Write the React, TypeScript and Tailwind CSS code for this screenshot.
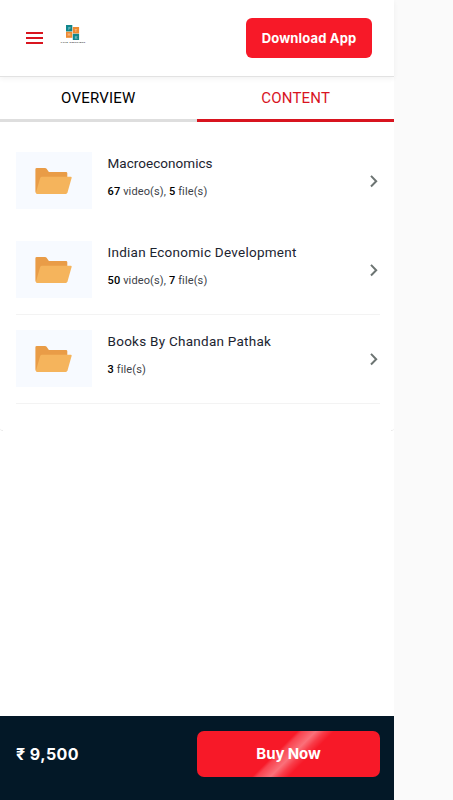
import { Fragment } from 'react'

type Folder = {
    title: string
    counts: { count: number, label: string }[]
    divider: boolean
    titleClass: string
}

const folders: Folder[] = [
    {
        title: 'Macroeconomics',
        counts: [{ count: 67, label: 'video(s)' }, { count: 5, label: 'file(s)' }],
        divider: false,
        titleClass: 'tracking-[0.04px]',
    },
    {
        title: 'Indian Economic Development',
        counts: [{ count: 50, label: 'video(s)' }, { count: 7, label: 'file(s)' }],
        divider: true,
        titleClass: 'tracking-[0.26px]',
    },
    {
        title: 'Books By Chandan Pathak',
        counts: [{ count: 3, label: 'file(s)' }],
        divider: true,
        titleClass: 'tracking-[0.26px]',
    },
]

const Logo = () => (
    <svg width="26" height="22" viewBox="0 0 26 22" className="mb-[6px] ml-[17px]" fontFamily="Roboto, sans-serif">
        <rect x="6" y="1" width="6.3" height="6.5" fill="#11868b" />
        <rect x="12.8" y="3" width="6.3" height="6.5" fill="#ee8a30" />
        <rect x="6" y="7.8" width="6.3" height="6" fill="#ee8a30" />
        <rect x="12.8" y="9.8" width="6.3" height="6.2" fill="#11868b" />
        <g fill="#fff" fillOpacity="0.5" fontSize="4" fontWeight="700" textAnchor="middle">
            <text x="9.2" y="5.7">P</text>
            <text x="16" y="7.7">T</text>
            <text x="9.2" y="12.3">H</text>
            <text x="16" y="14.5">K</text>
        </g>
        <text x="0.8" y="19.4" fontSize="2.4" fontWeight="700" textLength="24.5" fill="#333">PTHK CREATIONS</text>
    </svg>
)

const FolderIcon = () => (
    <svg width="38" height="28" viewBox="0 0 38 28">
        <path d="M.4 2.2Q.4.9 1.7.9H10q1 0 1.6.9l1.9 2.6q.4.6 1.3.6H31q1.3 0 1.3 1.3V14L2.5 26.6Q.4 26.6.4 24.6Z" fill="#e99c47" />
        <path d="M7 9.8h28.8q1.1 0 .8 1.1l-4.1 14.7q-.4 1.3-1.7 1.3H2.2Q.6 26.9 1 25.2L5.2 11.1Q5.6 9.8 7 9.8Z" fill="#f5b45c" />
    </svg>
)

const ChevronIcon = () => (
    <svg width="10" height="14" viewBox="0 0 10 14" fill="none" stroke="#6c7472" strokeWidth="2">
        <path d="M2 1.9 7.2 7.2 2 12.5" />
    </svg>
)

const FolderRow = ({ folder }: { folder: Folder }) => (
    <li className={`flex h-[89px] border-b ${folder.divider ? 'border-[#f3f3f3]' : 'border-transparent'}`}>
        <div className="mt-[15px] flex h-[57px] w-[76px] items-center justify-center bg-[#f7faff]">
            <FolderIcon />
        </div>
        <div className="ml-[15.5px] flex-1 pt-4">
            <h2 className={`text-[13.5px] leading-5 text-[#1c2430] ${folder.titleClass}`}>{folder.title}</h2>
            <p className="mt-[9px] text-[11px] leading-5 tracking-[0.13px] text-[#3c4147]">
                {folder.counts.map(({ count, label }, i) => (
                    <Fragment key={label}>
                        {i > 0 && ', '}
                        <span className="font-medium text-black">{count}</span> {label}
                    </Fragment>
                ))}
            </p>
        </div>
        <div className="mr-[1px] pt-[37px]">
            <ChevronIcon />
        </div>
    </li>
)

const App = () => {
    return (
        <div className="h-[800px] w-full bg-[#fafafa] font-['Roboto','Noto_Sans',sans-serif]">
            <div className="flex h-full w-[394px] flex-col bg-white">
                <header className="z-10 flex h-[77px] items-center border-b border-[#e2e2e2] pl-[26px] pr-[22px] shadow-[0_2px_5px_rgba(0,0,0,0.05)]">
                    <button aria-label="Menu" className="flex w-[17px] flex-col gap-[3px]">
                        <span className="h-[2px] bg-[#d9151f]" />
                        <span className="h-[2px] bg-[#d9151f]" />
                        <span className="h-[2px] bg-[#d9151f]" />
                    </button>
                    <Logo />
                    <button className="ml-auto h-10 w-[126px] rounded-[6px] bg-[#f71928] pt-[1px] font-['Inter',sans-serif] text-[13px] font-bold tracking-[0.15px] text-white">Download App</button>
                </header>

                <nav className="flex h-[45px] text-center text-[15px] leading-[43px]">
                    <div className="flex-1 border-b-[3px] border-[#dedede] tracking-[0.2px] text-black">OVERVIEW</div>
                    <div className="flex-1 border-b-[3px] border-[#d8141f] pl-[1px] tracking-[0.2px] text-[#d8141f]">CONTENT</div>
                </nav>

                <ul className="flex-1 pl-4 pr-[14px] pt-[15px]">
                    {folders.map(folder => <FolderRow key={folder.title} folder={folder} />)}
                    <li className="-ml-4 -mr-[14px] flex h-[27px] items-end justify-between">
                        <span className="h-[3px] w-[3px] rounded-bl border-b border-[#e8e8e8]" />
                        <span className="h-[3px] w-[3px] rounded-br border-b border-[#e8e8e8]" />
                    </li>
                </ul>

                <footer className="flex h-[84px] justify-between bg-[#031827] pl-4 pr-[14px] pt-[15px] font-['Inter','Noto_Sans',sans-serif] text-white">
                    <span className="h-[46px] text-[16px] font-bold leading-[46px] tracking-[0.45px]">₹ 9,500</span>
                    <button className="h-[46px] w-[183px] rounded-[7px] bg-[#f71928] bg-[linear-gradient(135deg,transparent_44%,rgba(255,255,255,0.18)_46%,rgba(255,255,255,0.38)_52%,rgba(255,255,255,0.15)_56%,transparent_60%)] pt-[1px] text-[15px] font-bold tracking-[-0.1px]">Buy Now</button>
                </footer>
            </div>
        </div>
    )
}

export default App
